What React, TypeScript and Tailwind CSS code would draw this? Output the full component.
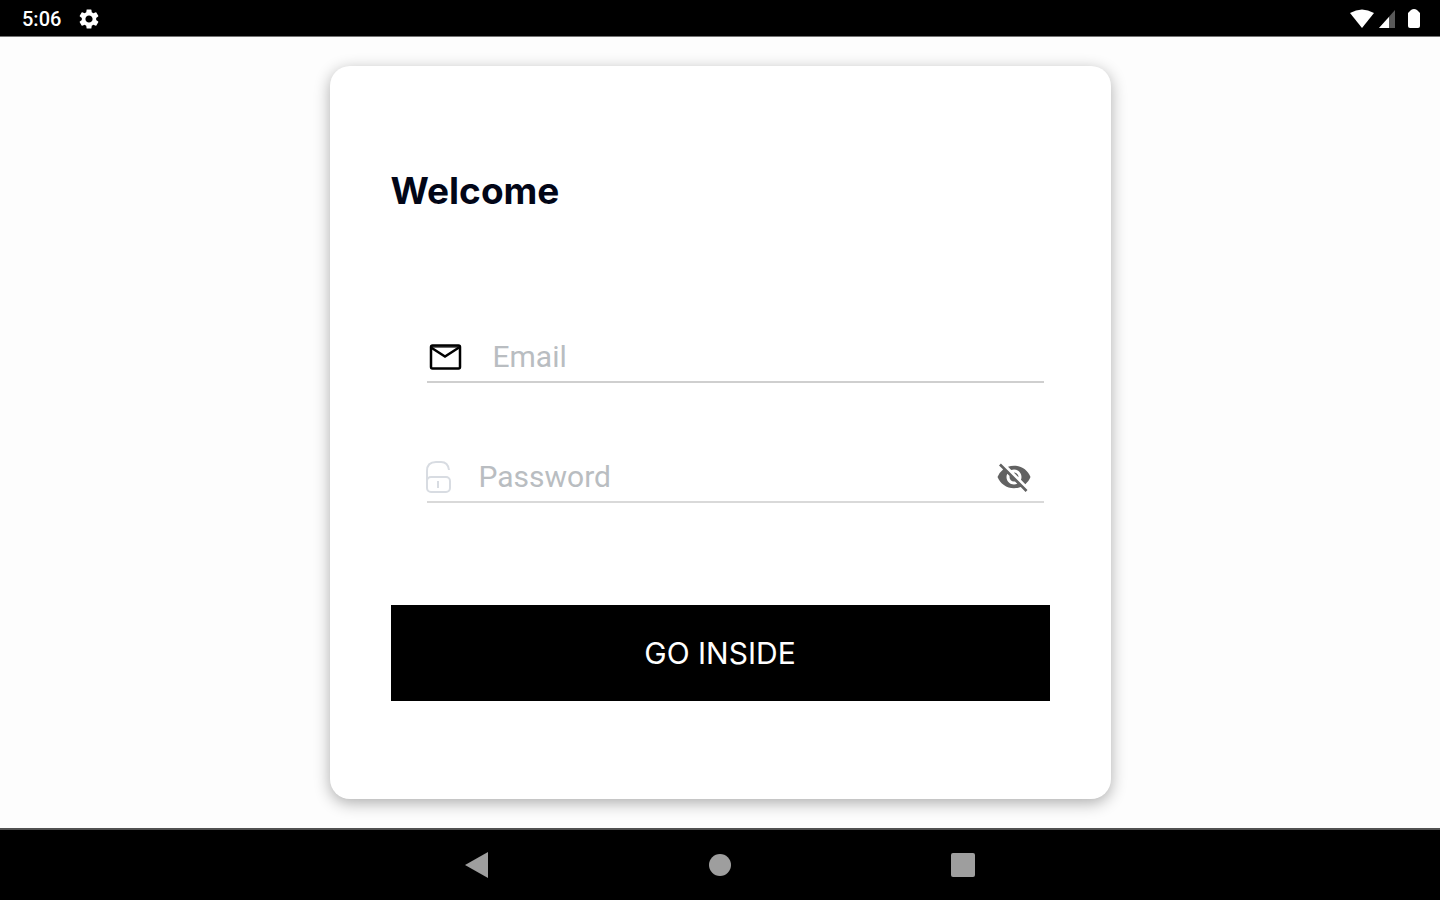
import { MdSettings, MdVisibilityOff } from "react-icons/md";

function StatusBar() {
  return (
    <header className="flex h-[37px] items-center justify-between border-b border-neutral-500 bg-black px-5 pt-0.5 text-white">
      <div className="flex items-center gap-4 pl-0.5">
        <span className="font-['Roboto',sans-serif] text-xl font-medium">5:06</span>
        <MdSettings size={24} />
      </div>

      <div className="flex items-center gap-1">
        <svg width="26" height="20" viewBox="0 0 26 20" fill="currentColor">
          <path d="M1 4Q13-3 25 4L13 19Z" />
        </svg>
        <svg width="17" height="20" viewBox="0 0 17 20" fill="currentColor">
          <path d="M16 1V19H0Z" opacity="0.35" />
          <path d="M10 8V19H0Z" />
        </svg>
        <svg className="ml-2" width="12" height="20" viewBox="0 0 12 20" fill="currentColor">
          <path d="M3 1Q6-1 9 1L12 4V17Q12 19 10 19H2Q0 19 0 17V4Z" />
        </svg>
      </div>
    </header>
  );
}

function MailIcon() {
  return (
    <svg width="36" height="30" viewBox="0 0 36 30" fill="none" stroke="#000">
      <path d="M4 4H32V7L18 16L4 7Z" fill="#fff" stroke="none" />
      <path d="M4 4.500H32" stroke="#6b6b6b" strokeWidth="3" />
      <path d="M4 5.500L18 14.500L32 5.500" strokeWidth="2.500" />
      <rect x="4" y="3.500" width="29" height="23" rx="1.500" strokeWidth="2.500" />
    </svg>
  );
}

function UnlockIcon() {
  return (
    <svg width="28" height="34" viewBox="0 0 28 34" fill="none" stroke="#d8dce2" strokeWidth="2">
      <path d="M2 22V11Q2 2 11 2H16Q23 2 24 10" />
      <rect x="2" y="17" width="23" height="15" rx="4" />
      <path d="M13 21V28" />
    </svg>
  );
}

function LoginForm() {
  return (
    <form className="flex flex-col" onSubmit={(event) => event.preventDefault()}>
      <div className="mr-1.5 ml-9 flex h-[50px] items-center border-b-2 border-[#cfcfcf]">
        <label htmlFor="email" aria-label="Email" className="w-[66px]">
          <MailIcon />
        </label>
        <input
          id="email"
          type="email"
          placeholder="Email"
          className="min-w-0 flex-1 bg-transparent text-[30px] leading-9 outline-none placeholder:text-[#b9bdc1]"
        />
      </div>

      <div className="mt-[70px] mr-1.5 ml-9 flex h-[50px] items-center border-b-2 border-[#d9d9d9]">
        <label htmlFor="password" aria-label="Password" className="-ml-0.5 w-[54px]">
          <UnlockIcon />
        </label>
        <input
          id="password"
          type="password"
          placeholder="Password"
          className="min-w-0 flex-1 bg-transparent text-[30px] leading-9 outline-none placeholder:text-[#b9bdc1]"
        />
        <button type="button" aria-label="Show password" className="mr-3 text-[#626262]">
          <MdVisibilityOff size={36} />
        </button>
      </div>

      <button
        type="submit"
        className="mt-[102px] h-24 bg-black font-['Inter',sans-serif] text-[30px] text-white"
      >
        GO INSIDE
      </button>
    </form>
  );
}

function NavigationBar() {
  return (
    <nav className="flex h-[72px] items-center justify-center gap-[218px] border-t-2 border-neutral-600 bg-black text-[#9e9e9e]">
      <button type="button" aria-label="Back">
        <svg width="26" height="26" viewBox="0 0 26 26" fill="currentColor">
          <path d="M1 13 24 0V26Z" />
        </svg>
      </button>
      <button type="button" aria-label="Home">
        <svg width="24" height="26" viewBox="0 0 24 26" fill="currentColor">
          <circle cx="12" cy="13" r="11" />
        </svg>
      </button>
      <button type="button" aria-label="Recent apps">
        <svg width="26" height="26" viewBox="0 0 26 26" fill="currentColor">
          <rect x="1" y="1" width="24" height="24" rx="2" />
        </svg>
      </button>
    </nav>
  );
}

function App() {
  return (
    <div className="flex min-h-screen flex-col bg-[#fdfdfd] font-['Roboto',sans-serif]">
      <StatusBar />

      <main className="flex flex-1 justify-center px-6 py-[29px]">
        <section className="w-full max-w-[781px] rounded-[20px] bg-white px-[61px] pt-[105px] pb-[98px] shadow-[0_4px_16px_rgba(0,0,0,0.32)]">
          <h1 className="font-['Inter',sans-serif] text-[37px] leading-10 font-bold text-[#020617]">
            Welcome
          </h1>
          <div className="mt-[122px]">
            <LoginForm />
          </div>
        </section>
      </main>

      <NavigationBar />
    </div>
  );
}

export default App;
